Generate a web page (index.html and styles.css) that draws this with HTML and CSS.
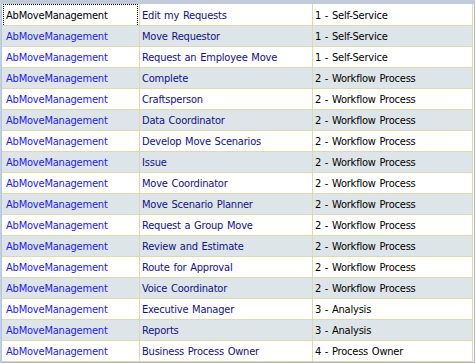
FILE: index.html
```html
<!DOCTYPE html>
<html>
<head>
<meta charset="utf-8">
<link rel="stylesheet" href="styles.css">
</head>
<body>
<div class="frame">
<div class="grid">
<div class="row"><div class="cell c1 focused"><span class="focus">AbMoveManagement</span></div><div class="cell c2">Edit my Requests</div><div class="cell c3">1 - Self-Service</div></div>
<div class="row alt"><div class="cell c1">AbMoveManagement</div><div class="cell c2">Move Requestor</div><div class="cell c3">1 - Self-Service</div></div>
<div class="row"><div class="cell c1">AbMoveManagement</div><div class="cell c2">Request an Employee Move</div><div class="cell c3">1 - Self-Service</div></div>
<div class="row alt"><div class="cell c1">AbMoveManagement</div><div class="cell c2">Complete</div><div class="cell c3">2 - Workflow Process</div></div>
<div class="row"><div class="cell c1">AbMoveManagement</div><div class="cell c2">Craftsperson</div><div class="cell c3">2 - Workflow Process</div></div>
<div class="row alt"><div class="cell c1">AbMoveManagement</div><div class="cell c2">Data Coordinator</div><div class="cell c3">2 - Workflow Process</div></div>
<div class="row"><div class="cell c1">AbMoveManagement</div><div class="cell c2">Develop Move Scenarios</div><div class="cell c3">2 - Workflow Process</div></div>
<div class="row alt"><div class="cell c1">AbMoveManagement</div><div class="cell c2">Issue</div><div class="cell c3">2 - Workflow Process</div></div>
<div class="row"><div class="cell c1">AbMoveManagement</div><div class="cell c2">Move Coordinator</div><div class="cell c3">2 - Workflow Process</div></div>
<div class="row alt"><div class="cell c1">AbMoveManagement</div><div class="cell c2">Move Scenario Planner</div><div class="cell c3">2 - Workflow Process</div></div>
<div class="row"><div class="cell c1">AbMoveManagement</div><div class="cell c2">Request a Group Move</div><div class="cell c3">2 - Workflow Process</div></div>
<div class="row alt"><div class="cell c1">AbMoveManagement</div><div class="cell c2">Review and Estimate</div><div class="cell c3">2 - Workflow Process</div></div>
<div class="row"><div class="cell c1">AbMoveManagement</div><div class="cell c2">Route for Approval</div><div class="cell c3">2 - Workflow Process</div></div>
<div class="row alt"><div class="cell c1">AbMoveManagement</div><div class="cell c2">Voice Coordinator</div><div class="cell c3">2 - Workflow Process</div></div>
<div class="row"><div class="cell c1">AbMoveManagement</div><div class="cell c2">Executive Manager</div><div class="cell c3">3 - Analysis</div></div>
<div class="row alt"><div class="cell c1">AbMoveManagement</div><div class="cell c2">Reports</div><div class="cell c3">3 - Analysis</div></div>
<div class="row"><div class="cell c1">AbMoveManagement</div><div class="cell c2">Business Process Owner</div><div class="cell c3">4 - Process Owner</div></div>
</div>
</div>
</body>
</html>
```
FILE: styles.css
```css
html, body {
  margin: 0;
  padding: 0;
  background: #ffffff;
}
.frame {
  width: 473px;
  height: 359px;
  border-top: 3px solid #c3cad6;
  border-left: 1px solid #c8d0dc;
  border-right: 2px solid #b4b4b4;
  border-bottom: 1px solid #b4b4b4;
  background: #ffffff;
  overflow: hidden;
}
.grid {
  display: grid;
  grid-template-columns: 138px 173px 160px;
  grid-template-rows: 22px repeat(16, 21px);
  border-top: 1px solid #b8cdea;
  border-left: 1px solid #b0c8e8;
  font-family: "DejaVu Sans Condensed", "DejaVu Sans", sans-serif;
  font-stretch: condensed;
  font-size: 11px;
  letter-spacing: -0.2px;
  word-spacing: 0.8px;
}
.row {
  display: contents;
}
.cell {
  border-right: 1px solid #e0d8b0;
  border-bottom: 1px solid #e0d8b0;
  padding: 2px 0 0 2px;
  line-height: 18px;
  white-space: nowrap;
  overflow: hidden;
}
.row:first-child .cell {
  padding-top: 3px;
}
.alt .cell {
  background: #dee5e9;
}
.c1 {
  color: #1a1aff;
  padding-left: 4px;
}
.c2 {
  color: #10108a;
}
.c3 {
  color: #000000;
}
.row:first-child .focused {
  padding: 0;
}
.focus {
  display: block;
  margin: 0 1px;
  height: 21px;
  padding: 2px 0 0 2px;
  border: 1px dotted #000000;
  color: #000000;
  line-height: 18px;
}
```
